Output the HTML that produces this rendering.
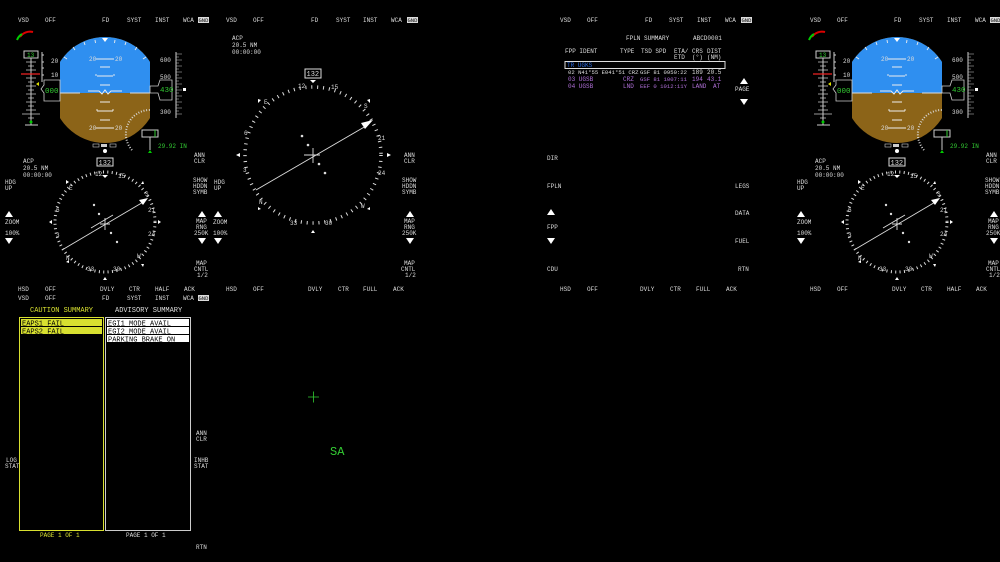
<!DOCTYPE html>
<html><head><meta charset="utf-8"><style>
html,body{margin:0;padding:0;background:#000;width:1000px;height:562px;overflow:hidden}
svg text{font-family:"Liberation Mono",monospace;font-size:6px;fill:#dcdcdc}
</style></head><body>
<svg width="1000" height="562" viewBox="0 0 1000 562" xmlns="http://www.w3.org/2000/svg">
<defs>
<clipPath id="ball"><rect x="60" y="30" width="90" height="120"/></clipPath>
<clipPath id="ballc"><circle cx="105" cy="90" r="53"/></clipPath>
<g id="pfd">
  <text x="18" y="22">VSD</text><text x="45" y="22">OFF</text><text x="102" y="22">FD</text><text x="127" y="22">SYST</text><text x="155" y="22">INST</text><text x="183" y="22">WCA</text>
  <rect x="198" y="17" width="11" height="6" fill="#dcdcdc"/><text x="198.5" y="22" style="fill:#000;font-size:5.5px">GND</text>
  <g clip-path="url(#ball)"><g clip-path="url(#ballc)">
    <rect x="50" y="30" width="110" height="130" fill="#8c6418"/>
    <rect x="50" y="30" width="110" height="63" fill="#2f8ff0"/>
  </g></g>
  <line x1="60" y1="93" x2="80" y2="93" stroke="#ddd" stroke-width="1"/><line x1="130" y1="93" x2="150" y2="93" stroke="#ddd" stroke-width="1"/>
  <path d="M88,91 L99,91 L102,94 L105,90 L108,94 L111,91 L122,91" stroke="#eee" fill="none" stroke-width="1"/>
  <g stroke="#eee" stroke-width="0.9" fill="none">
    <path d="M96,59 h18 M100,67 h10 M97,76 h16 M96,74 v2 M114,74 v2 M100,85 h10 M100,102 h10 M97,111 h16 M97,109 v2 M113,109 v2 M100,120 h10 M96,128 h18"/>
    <path d="M73,47 l2,3 M84,42 l1,3 M126,42 l-1,3 M137,47 l-2,3 M64,57 l3,2 M146,57 l-3,2 M95,40 l0.5,3 M115,40 l-0.5,3"/>
  </g>
  <text x="89" y="61">20</text><text x="115" y="61">20</text><text x="89" y="130">20</text><text x="115" y="130">20</text>
  <path d="M102,38 h6 l-3,4 z" fill="#fff"/>
  <path d="M20,37 A12,12 0 0 1 33,32" stroke="#d00" stroke-width="2" fill="none"/>
  <path d="M17,40 A12,12 0 0 1 22,34" stroke="#0c0" stroke-width="2" fill="none"/>
  <rect x="24" y="51" width="14" height="7" fill="none" stroke="#ccc"/><text x="27" y="57" style="fill:#3c3">13</text>
  <line x1="31" y1="58" x2="31" y2="125" stroke="#ccc"/>
  <g stroke="#ccc" stroke-width="0.8"><path d="M26,62h10M28,66h6M26,70h10M28,74h6M26,78h10M28,82h6M26,86h10M28,90h6M26,94h10M28,98h6M26,102h10M28,106h6M26,110h10M22,114h18M28,118h6"/></g>
  <line x1="21" y1="74" x2="40" y2="74" stroke="#e22" stroke-width="1.2"/>
  <path d="M36,84 l3,-2 v4z" fill="#dd0"/>
  <circle cx="31" cy="122" r="1.5" fill="#0c0"/>
  <line x1="25" y1="125" x2="38" y2="125" stroke="#ccc"/>
  <path d="M41,89 L44,85 V80 H60 V101 H44 V93 Z" fill="#000" stroke="#ccc" stroke-width="0.8"/>
  <text x="45" y="93" style="fill:#3c3;font-size:7.5px">000</text>
  <line x1="42" y1="52" x2="42" y2="82" stroke="#ccc"/><path d="M42,55h2M42,62h2M42,68h2M42,75h2" stroke="#ccc"/>
  <text x="51" y="63">20</text><text x="51" y="77">10</text>
  <line x1="176" y1="52" x2="176" y2="118" stroke="#ccc"/>
  <g stroke="#ccc" stroke-width="0.6"><path d="M176,54h6M176,57h3M176,60h6M176,63h3M176,66h6M176,69h3M176,72h6M176,75h3M176,78h6M176,81h3M176,84h6M176,87h3M176,90h6M176,93h3M176,96h6M176,99h3M176,102h6M176,105h3M176,108h6M176,111h3M176,114h6"/></g>
  <text x="160" y="62">600</text><text x="160" y="79">500</text><text x="160" y="114">300</text>
  <path d="M150,86 H158 L160,80 H172 V100 H160 L158,93 H150 Z" fill="#000" stroke="#ccc" stroke-width="0.8"/>
  <text x="160" y="92" style="fill:#3c3;font-size:7.5px">430</text>
  <rect x="183" y="88" width="3" height="3" fill="#fff"/>
  <path d="M132,150 A24,24 0 0 1 150,110" stroke="#ddd" stroke-width="2" stroke-dasharray="0.9 1.8" fill="none"/>
  <rect x="142" y="130" width="16" height="7" fill="none" stroke="#ccc"/><line x1="155" y1="130" x2="155" y2="137" stroke="#3c3"/>
  <line x1="150" y1="137" x2="150" y2="150" stroke="#ccc"/><path d="M148,153 l2,-3 l2,3z" fill="#0c0"/>
  <text x="158" y="148" style="fill:#3c3">29.92 IN</text>
  <rect x="93" y="144" width="6" height="3" fill="none" stroke="#ccc" stroke-width="0.6"/><rect x="101" y="144" width="6" height="3" fill="#ccc"/><rect x="110" y="144" width="6" height="3" fill="none" stroke="#ccc" stroke-width="0.6"/>
  <circle cx="105" cy="151" r="2" fill="#fff"/>
  <rect x="97" y="158" width="16" height="8" fill="none" stroke="#ddd"/><text x="98.5" y="165" style="font-size:7px">132</text>
  <text x="23" y="163">ACP</text><text x="23" y="170">20.5 NM</text><text x="23" y="177">00:00:00</text>
  <text x="5" y="184">HDG</text><text x="5" y="190">UP</text>
  <path d="M5,217 l4,-6 l4,6z" fill="#fff"/><text x="5" y="224">ZOOM</text><text x="5" y="235">100%</text><path d="M5,238 l4,6 l4,-6z" fill="#fff"/>
  <text x="194" y="157">ANN</text><text x="194" y="163">CLR</text>
  <text x="193" y="182">SHOW</text><text x="193" y="188">HDDN</text><text x="193" y="194">SYMB</text>
  <path d="M198,217 l4,-6 l4,6z" fill="#fff"/><text x="196" y="223">MAP</text><text x="196" y="229">RNG</text><text x="194" y="235">250K</text><path d="M198,238 l4,6 l4,-6z" fill="#fff"/>
  <text x="196" y="265">MAP</text><text x="194" y="271">CNTL</text><text x="197" y="277">1/2</text>
  <circle cx="105" cy="222" r="50" fill="none" stroke="#ddd" stroke-width="3" stroke-dasharray="1 3.4"/>
  <text x="95" y="176">12</text><text x="118" y="178">15</text><text x="145" y="196">S</text><text x="148" y="212">21</text><text x="148" y="236">24</text><text x="137" y="258">W</text><text x="113" y="271">30</text><text x="87" y="271">33</text><text x="66" y="260">N</text><text x="56" y="237">3</text><text x="56" y="212">6</text><text x="69" y="190">E</text>
  <path d="M66,180 l3,2 -3,2z M144,184 l-3,0 2,-3z M144,264 l-3,0 2,3z M66,262 l3,-2 0,3z M49,222 l3,-2 v4z M161,222 l-3,-2 v4z M103,280 l2,-3 2,3z" fill="#fff"/>
  <path d="M102,175 h6 l-3,3z" fill="#fff"/>
  <line x1="62" y1="250" x2="145" y2="201" stroke="#ddd" stroke-width="0.9"/>
  <path d="M148,198 l-9,2 4,5z" fill="#fff"/>
  <path d="M93,228 l23,-13" stroke="#000" stroke-width="2"/>
  <path d="M91,228 l22,-13" stroke="#ddd" stroke-width="0.9"/>
  <path d="M100,224 h10 M105,218 v12" stroke="#ddd" stroke-width="0.9"/>
  <circle cx="94" cy="205" r="1.2" fill="#ddd"/><circle cx="99" cy="214" r="1.2" fill="#ddd"/><circle cx="111" cy="233" r="1.2" fill="#ddd"/><circle cx="117" cy="242" r="1.2" fill="#ddd"/>
  <text x="18" y="291">HSD</text><text x="45" y="291">OFF</text><text x="100" y="291">DVLY</text><text x="129" y="291">CTR</text><text x="155" y="291">HALF</text><text x="184" y="291">ACK</text>
</g>
</defs>

<use href="#pfd"/>
<use href="#pfd" x="792"/>

<text x="226" y="22">VSD</text><text x="253" y="22">OFF</text><text x="311" y="22">FD</text><text x="336" y="22">SYST</text><text x="363" y="22">INST</text><text x="391" y="22">WCA</text>
<rect x="407" y="17" width="11" height="6" fill="#dcdcdc"/><text x="407.5" y="22" style="fill:#000;font-size:5.5px">GND</text>
<text x="232" y="40">ACP</text><text x="232" y="47">20.5 NM</text><text x="232" y="54">00:00:00</text>
<rect x="305" y="69" width="16" height="9" fill="none" stroke="#ddd"/><text x="306.5" y="76" style="font-size:7px">132</text>
<circle cx="313" cy="155" r="68" fill="none" stroke="#ddd" stroke-width="3.5" stroke-dasharray="1 4.9"/>
<text x="298" y="88">12</text><text x="331" y="89">15</text><text x="364" y="108">S</text><text x="378" y="140">21</text><text x="378" y="175">24</text><text x="361" y="208">W</text><text x="325" y="225">30</text><text x="290" y="225">33</text><text x="259" y="204">N</text><text x="243" y="172">3</text><text x="244" y="135">6</text><text x="264" y="104">E</text>
<path d="M310,80 h6 l-3,3z M258,99 l3,1 -3,3z M370,99 l-3,1 3,3z M258,210 l3,-1 -3,-2z M370,210 l-3,-1 3,-2z M236,155 l4,-2 v4z M391,155 l-4,-2 v4z M311,233 l2,-3 2,3z" fill="#fff"/>
<line x1="256" y1="190" x2="366" y2="126" stroke="#ddd" stroke-width="0.9"/>
<path d="M373,120 l-12,3 4,6z" fill="#fff"/>
<path d="M300,160 l8,-5 M314,151 l8,-5" stroke="#000" stroke-width="2"/>
<path d="M304,155 h16 M313,148 v15" stroke="#ddd" stroke-width="0.9"/>
<circle cx="302" cy="136" r="1.3" fill="#ddd"/><circle cx="308" cy="145" r="1.3" fill="#ddd"/><circle cx="319" cy="164" r="1.3" fill="#ddd"/><circle cx="325" cy="173" r="1.3" fill="#ddd"/>
<text x="214" y="184">HDG</text><text x="214" y="190">UP</text>
<path d="M214,217 l4,-6 l4,6z" fill="#fff"/><text x="213" y="224">ZOOM</text><text x="213" y="235">100%</text><path d="M214,238 l4,6 l4,-6z" fill="#fff"/>
<text x="404" y="157">ANN</text><text x="404" y="163">CLR</text>
<text x="402" y="182">SHOW</text><text x="402" y="188">HDDN</text><text x="402" y="194">SYMB</text>
<path d="M406,217 l4,-6 l4,6z" fill="#fff"/><text x="404" y="223">MAP</text><text x="404" y="229">RNG</text><text x="402" y="235">250K</text><path d="M406,238 l4,6 l4,-6z" fill="#fff"/>
<text x="404" y="265">MAP</text><text x="401" y="271">CNTL</text><text x="405" y="277">1/2</text>
<text x="226" y="291">HSD</text><text x="253" y="291">OFF</text><text x="308" y="291">DVLY</text><text x="338" y="291">CTR</text><text x="363" y="291">FULL</text><text x="393" y="291">ACK</text>

<text x="18" y="300">VSD</text><text x="45" y="300">OFF</text><text x="102" y="300">FD</text><text x="127" y="300">SYST</text><text x="155" y="300">INST</text><text x="183" y="300">WCA</text>
<rect x="198" y="295" width="11" height="6" fill="#dcdcdc"/><text x="198.5" y="300" style="fill:#000;font-size:5.5px">GND</text>
<text x="30" y="312" style="fill:#d8e030;font-size:7px">CAUTION SUMMARY</text>
<text x="115" y="312" style="font-size:7px">ADVISORY SUMMARY</text>
<rect x="19.5" y="317.5" width="84" height="213" fill="none" stroke="#d8e030"/>
<rect x="105.5" y="317.5" width="85" height="213" fill="none" stroke="#ccc"/>
<rect x="21" y="319" width="81" height="7" fill="#d8e030"/><rect x="21" y="327" width="81" height="7" fill="#d8e030"/>
<text x="22" y="325.5" style="fill:#000;font-size:7px">EAPS1 FAIL</text><text x="22" y="333.5" style="fill:#000;font-size:7px">EAPS2 FAIL</text>
<rect x="107" y="319" width="82" height="7" fill="#fff"/><rect x="107" y="327" width="82" height="7" fill="#fff"/><rect x="107" y="335" width="82" height="7" fill="#fff"/>
<text x="108" y="325.5" style="fill:#000;font-size:7px">EGI1 MODE AVAIL</text><text x="108" y="333.5" style="fill:#000;font-size:7px">EGI2 MODE AVAIL</text><text x="108" y="341.5" style="fill:#000;font-size:7px">PARKING BRAKE ON</text>
<text x="40" y="537" style="fill:#d8e030">PAGE 1 OF 1</text><text x="126" y="537">PAGE 1 OF 1</text>
<text x="6" y="462">LOG</text><text x="5" y="468">STAT</text>
<text x="196" y="435">ANN</text><text x="196" y="441">CLR</text>
<text x="194" y="462">INHB</text><text x="194" y="468">STAT</text>
<text x="196" y="549">RTN</text>
<path d="M308,397 h11 M313.5,391.5 v11" stroke="#3c3" stroke-width="0.8"/>
<text x="330" y="455" style="fill:#3c3;font-size:12px">SA</text>

<text x="560" y="22">VSD</text><text x="587" y="22">OFF</text><text x="645" y="22">FD</text><text x="669" y="22">SYST</text><text x="697" y="22">INST</text><text x="725" y="22">WCA</text>
<rect x="741" y="17" width="11" height="6" fill="#dcdcdc"/><text x="741.5" y="22" style="fill:#000;font-size:5.5px">GND</text>
<text x="626" y="40">FPLN SUMMARY</text><text x="693" y="40">ABCD0001</text>
<text x="565" y="53">FPP IDENT</text><text x="620" y="53">TYPE</text><text x="641" y="53">TSD SPD</text><text x="674" y="53">ETA/</text><text x="674" y="59">ETD</text><text x="692" y="53">CRS</text><text x="692" y="59">(°)</text><text x="707" y="53">DIST</text><text x="707" y="59">(NM)</text>
<rect x="565" y="61.5" width="160" height="7" fill="none" stroke="#ddd"/>
<text x="567" y="67" style="fill:#2a6ae0">TR UGKS</text>
<text x="568" y="74" style="font-size:5.6px">02 N41°55 E041°51 CRZ</text><text x="640" y="74" style="font-size:5.6px">GSF 81 0950:22</text><text x="692" y="74">189</text><text x="707" y="74">20.5</text>
<text x="568" y="81" style="fill:#b070d8">03 UGSB</text><text x="623" y="81" style="fill:#b070d8">CRZ</text><text x="640" y="81" style="fill:#b070d8;font-size:5.6px">GSF 81 1007:11</text><text x="692" y="81" style="fill:#b070d8">194</text><text x="707" y="81" style="fill:#b070d8">43.1</text>
<text x="568" y="88" style="fill:#b070d8">04 UGSB</text><text x="623" y="88" style="fill:#b070d8">LND</text><text x="640" y="88" style="fill:#b070d8;font-size:5.6px">EEF  0 1012:11Y</text><text x="692" y="88" style="fill:#b070d8">LAND</text><text x="713" y="88" style="fill:#b070d8">AT</text>
<path d="M740,84 l4,-6 l4,6z M740,99 l4,6 l4,-6z" fill="#fff"/><text x="735" y="91">PAGE</text>
<text x="547" y="160">DIR</text><text x="547" y="188">FPLN</text>
<path d="M547,215 l4,-6 l4,6z M547,238 l4,6 l4,-6z" fill="#fff"/><text x="547" y="229">FPP</text>
<text x="547" y="271">CDU</text>
<text x="735" y="188">LEGS</text><text x="735" y="215">DATA</text><text x="735" y="243">FUEL</text><text x="738" y="271">RTN</text>
<text x="560" y="291">HSD</text><text x="587" y="291">OFF</text><text x="640" y="291">DVLY</text><text x="670" y="291">CTR</text><text x="696" y="291">FULL</text><text x="726" y="291">ACK</text>
</svg>
</body></html>
